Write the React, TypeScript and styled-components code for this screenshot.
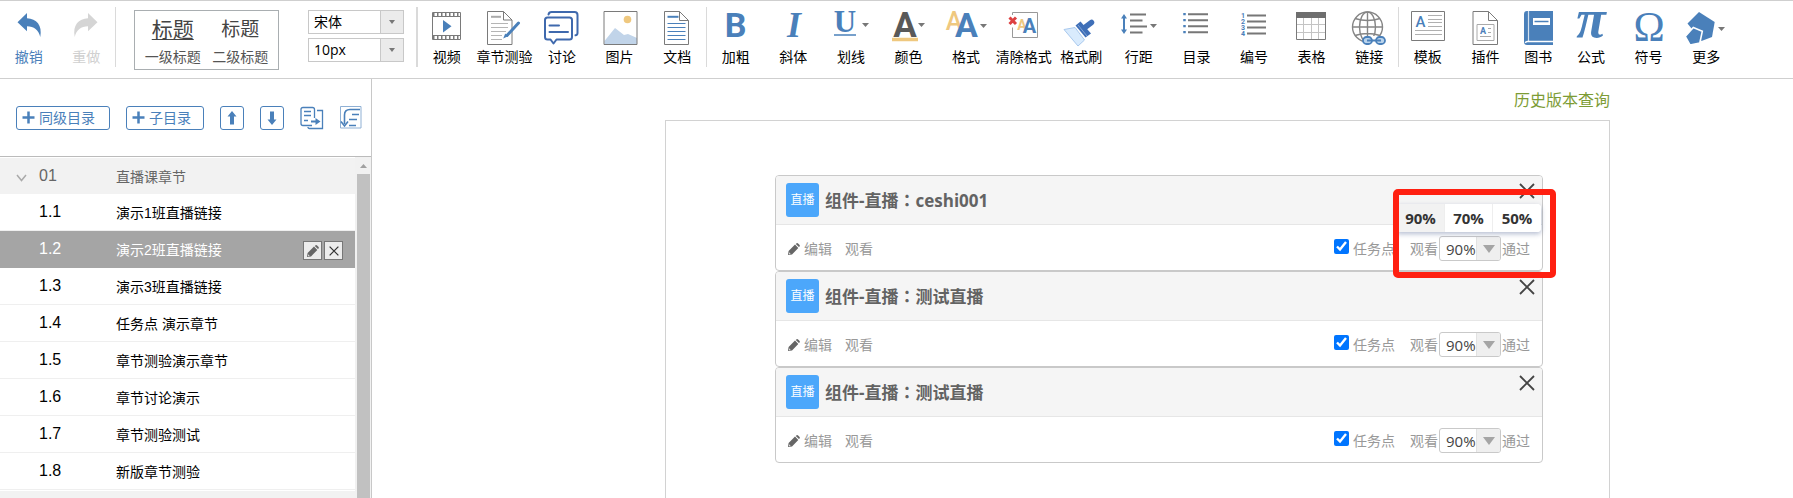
import React from "react";
import styled, { createGlobalStyle, css } from "styled-components";

const BLUE = "#4a80ba";
const GRAY = "#7a7a7a";
const GOLD = "#efc87f";

const GlobalStyle = createGlobalStyle`
  * { box-sizing: border-box; }
  body {
    margin: 0;
    background: #fff;
    color: #111;
    font-family: "Open Sans", "Noto Sans CJK SC", sans-serif;
    font-size: 14px;
    overflow: hidden;
  }
  button, select, input { font: inherit; color: inherit; margin: 0; }
  button { border: 0; padding: 0; background: none; cursor: pointer; }
  svg { display: block; flex: none; overflow: visible; }
`;

const Page = styled.div`
  display: flex;
  flex-direction: column;
  height: 100vh;
`;

/* ---------- top toolbar ---------- */

const Toolbar = styled.header`
  display: flex;
  flex: none;
  padding: 6px 0 11px;
  border-top: 1px solid #cfcfcf;
  border-bottom: 1px solid #cfcfcf;
`;

const ToolGroup = styled.div<{ $width: number; $columns: string }>`
  display: grid;
  flex: none;
  width: ${(p) => p.$width}px;
  grid-template-columns: ${(p) => p.$columns};
`;

const Separator = styled.div<{ $wide?: boolean }>`
  flex: none;
  width: ${(p) => (p.$wide ? 2 : 1)}px;
  height: 60px;
  background: #dadada;
`;

const ToolButton = styled.button<{ $tone?: string }>`
  display: flex;
  flex-direction: column;
  align-items: center;
  padding-top: 3px;
  gap: 2px;
  min-width: 0;
  line-height: 18px;
  white-space: nowrap;
  color: ${(p) => p.$tone || "#000"};
`;

const StyleArea = styled.div`
  display: flex;
  flex: none;
  width: 300px;
  height: 60px;
  padding: 3px 0 0 18px;
  gap: 29px;
`;

const HeadingBox = styled.div`
  display: grid;
  grid-template-columns: 1fr 1fr;
  flex: none;
  width: 145px;
  height: 60px;
  padding: 0 4px;
  border: 1px solid #a9aeb1;
`;

const HeadingButton = styled.button<{ $main?: boolean }>`
  display: flex;
  flex-direction: column;
  align-items: center;
  color: #555;
  white-space: nowrap;
  line-height: 18px;
  strong {
    font-weight: 400;
    color: #444;
    font-size: ${(p) => (p.$main ? 21 : 19)}px;
    line-height: 37px;
    text-decoration: ${(p) => (p.$main ? "underline" : "none")};
    text-underline-offset: 2px;
    text-decoration-thickness: 1px;
  }
`;

const FontSelects = styled.div`
  display: flex;
  flex-direction: column;
  gap: 4px;
`;

const selectFace = css`
  appearance: none;
  width: 100%;
  height: 100%;
  border: 0;
  background: transparent;
  outline: none;
`;

const FontSelect = styled.label`
  display: grid;
  grid-template-columns: 1fr 23px;
  width: 96px;
  height: 24px;
  border: 1px solid #c8c8c8;
  color: #000;
  select { ${selectFace} padding: 0 0 2px 5px; }
  span {
    display: grid;
    place-items: center;
    background: #ebebeb;
    border-left: 1px solid #c8c8c8;
  }
`;

/* ---------- catalogue sidebar ---------- */

const Body = styled.div`
  display: flex;
  flex: 1;
  min-height: 0;
`;

const Sidebar = styled.aside`
  display: flex;
  flex-direction: column;
  flex: none;
  width: 372px;
  border-right: 1px solid #c8c8c8;
`;

const SidebarActions = styled.div`
  display: flex;
  flex: none;
  align-items: center;
  gap: 16px;
  height: 78px;
  padding: 0 9px 0 16px;
  border-bottom: 1px solid #bbb;
`;

const OutlineButton = styled.button<{ $width: number }>`
  display: flex;
  flex: none;
  align-items: center;
  justify-content: ${(p) => (p.$width > 24 ? "flex-start" : "center")};
  gap: 4px;
  width: ${(p) => p.$width}px;
  height: 24px;
  padding-left: ${(p) => (p.$width > 24 ? 5 : 0)}px;
  border: 1px solid ${BLUE};
  border-radius: 3px;
  color: ${BLUE};
  white-space: nowrap;
  line-height: 20px;
`;

const Catalogue = styled.div`
  display: flex;
  flex: 1;
  min-height: 0;
`;

const ChapterList = styled.ul`
  flex: 1;
  margin: 0;
  padding: 0;
  list-style: none;
  overflow: hidden;
  font-family: "Liberation Sans", "Noto Sans CJK SC", sans-serif;
`;

const ChapterRow = styled.li<{ $kind?: "head" | "active" }>`
  display: grid;
  grid-template-columns: 38px 78px 1fr auto;
  align-items: center;
  height: 37px;
  padding-right: 12px;
  border-bottom: 1px solid #efefef;
  color: #000;
  ${(p) =>
    p.$kind === "head" &&
    css`
      border-top: 1px solid #fff;
      border-bottom-color: #f2f2f2;
      background: #f2f2f2;
      color: #666;
    `}
  ${(p) =>
    p.$kind === "active" &&
    css`
      border-bottom-color: #a5a5a5;
      background: #a5a5a5;
      color: #fff;
    `}
`;

const ChapterToggle = styled.span`
  padding: 4px 0 0 16px;
`;

const ChapterNumber = styled.span`
  font-size: 16px;
  line-height: 20px;
  padding-left: 1px;
`;

const RowActions = styled.span`
  display: flex;
  gap: 2px;
  padding-top: 3px;
`;

const SmallButton = styled.button`
  display: grid;
  place-items: center;
  width: 19px;
  height: 19px;
  border: 1px solid #777;
  background: #ececec;
`;

const ScrollTrack = styled.div`
  display: flex;
  flex-direction: column;
  width: 16px;
  padding: 0 1px 0 2px;
  background: #f1f1f1;
  svg { margin: 7px auto 6px; }
`;

const ScrollThumb = styled.div`
  flex: 1;
  background: #c1c1c1;
`;

/* ---------- editor ---------- */

const Main = styled.main`
  display: flex;
  flex-direction: column;
  flex: 1;
  min-width: 0;
  padding: 9px 183px 0 293px;
`;

const HistoryLink = styled.a`
  align-self: flex-end;
  margin-bottom: 8px;
  font-size: 16px;
  line-height: 24px;
  color: #7d9c35;
  text-decoration: none;
`;

const Sheet = styled.div`
  flex: 1;
  padding: 54px 66px 0 109px;
  border: 1px solid #d2d2d2;
  border-bottom: 0;
`;

const Card = styled.section`
  position: relative;
  height: 96px;
  border: 1px solid #c9c9c9;
  border-radius: 4px;
`;

const CardHeader = styled.div`
  display: flex;
  align-items: center;
  gap: 6px;
  height: 49px;
  padding: 0 7px 0 10px;
  border-bottom: 1px solid #e6e6e6;
  border-radius: 3px 3px 0 0;
  background: #f5f5f5;
`;

const LiveBadge = styled.span`
  display: grid;
  place-items: center;
  flex: none;
  width: 33px;
  height: 34px;
  border-radius: 3px;
  background: #4ca7fb;
  color: #fff;
  font-size: 12px;
  line-height: 16px;
`;

const CardTitle = styled.h2`
  flex: 1;
  margin: 0;
  font-size: 17px;
  line-height: 24px;
  font-weight: 700;
  color: #636363;
`;

const Colon = styled.span`
  font-family: "Noto Sans CJK TC", sans-serif;
`;

const CloseButton = styled.button`
  align-self: flex-start;
  padding-top: 7px;
`;

const CardFooter = styled.div`
  display: flex;
  align-items: center;
  height: 45px;
  padding: 2px 12px 0;
  color: #999;
  line-height: 20px;
`;

const TextButton = styled.button`
  display: flex;
  align-items: center;
  gap: 4px;
  margin-right: 13px;
`;

const TaskOption = styled.label`
  display: flex;
  align-items: center;
  gap: 4px;
  margin: 0 15px 0 auto;
  input {
    width: 15px;
    height: 15px;
    margin-bottom: 4px;
    accent-color: #0075ff;
  }
`;

const RateOption = styled.label`
  display: flex;
  align-items: center;
`;

const RateSelect = styled.span`
  display: grid;
  grid-template-columns: 1fr 24px;
  width: 62px;
  height: 25px;
  margin: 0 1px;
  border: 1px solid #c9c9c9;
  border-radius: 3px;
  overflow: hidden;
  color: #444;
  font-size: 15px;
  select { ${selectFace} padding: 0 0 0 6px; }
  span {
    display: grid;
    place-items: center;
    background: #efefef;
    border-left: 1px solid #e2e2e2;
  }
`;

const RateMenu = styled.div`
  position: absolute;
  top: 28px;
  right: 1px;
  display: grid;
  grid-template-columns: repeat(3, 48px);
  height: 28px;
  border-radius: 0 4px 4px 0;
  background: #fff;
  box-shadow: 0 2px 5px rgba(70, 90, 140, 0.4);
`;

const RateItem = styled.button<{ $on?: boolean }>`
  border-right: 1px solid #eee;
  background: ${(p) => (p.$on ? "#f2f2f2" : "#fff")};
  color: #333;
  font-size: 15px;
  font-weight: 700;
  &:last-child { border-right: 0; border-radius: 0 4px 4px 0; }
`;

const Highlight = styled.div`
  position: absolute;
  top: 13px;
  right: -14px;
  width: 163px;
  height: 89px;
  border: 6px solid #ff2011;
  border-radius: 5px;
  pointer-events: none;
  z-index: 2;
`;

/* ---------- drawings ---------- */

const Svg = ({ children }: { children: React.ReactNode }) => (
  <svg width="40" height="36" viewBox="0 0 40 36" fill="none" aria-hidden="true">
    {children}
  </svg>
);

const Caret = ({ x, y }: { x: number; y: number }) => (
  <path d={`M${x} ${y}h7l-3.5 4z`} fill="#777" />
);

const SERIF = "Liberation Serif, serif";
const SANS = "Roboto, sans-serif";

const Glyph = (p: {
  x: number;
  y: number;
  size: number;
  fill?: string;
  family?: string;
  weight?: number;
  italic?: boolean;
  children: string;
}) => (
  <text
    x={p.x}
    y={p.y}
    fontSize={p.size}
    fill={p.fill || BLUE}
    fontFamily={p.family || SANS}
    fontWeight={p.weight || 700}
    fontStyle={p.italic ? "italic" : "normal"}
    textAnchor="middle"
  >
    {p.children}
  </text>
);

const arrowPath = "M8.5 12.2L18 3v5.2C27.500 8.500 33.500 15 31.300 27C29.500 20 25 16.300 18 16.300v5z";

const icons: Record<string, React.ReactNode> = {
  undo: <path d={arrowPath} fill={BLUE} />,
  redo: <path d={arrowPath} fill="#d5d5d5" transform="translate(40 0) scale(-1 1)" />,
  video: (
    <>
      <path d="M5.500 2.500h28v27h-28z" stroke={GRAY} />
      <path d="M5.500 6.500h28M5.500 25.500h28" stroke={GRAY} />
      <path d="M6 4.500h27M6 27.500h27" stroke={GRAY} strokeWidth="3" strokeDasharray="1.500 2.500" />
      <path d="M16 10v12.500l8.500-6.200z" fill={BLUE} />
    </>
  ),
  quiz: (
    <>
      <path d="M3.500 1.500h16l8.500 8.500v24.500h-24.500z" stroke={GRAY} />
      <path d="M19.500 1.500v8.500h8.500" stroke={GRAY} />
      <path d="M7 6.800h10" stroke="#aaa" strokeWidth="2" />
      <path d="M7 13.500h17M7 17.500h17M7 21.500h15M7 25.500h11M7 29.500h11" stroke="#b5b5b5" />
      <path d="M34.500 13L23 25.500" stroke={BLUE} strokeWidth="3" strokeLinecap="round" />
      <path d="M21.200 23.500l-2 5 4.800-2.200z" fill={BLUE} />
    </>
  ),
  discuss: (
    <g stroke="#3f69ad" strokeWidth="2" strokeLinejoin="round" strokeLinecap="round">
      <path d="M6.500 4.500q.5-2.500 3-2.500h23q3 0 3 3v18q0 2-2 2.300" />
      <path d="M5.500 7.500h22q2.500 0 2.500 2.500v17q0 2.500-2.500 2.500h-13l-3 4-3-4h-3q-2.500 0-2.500-2.500v-17q0-2.500 2.500-2.500z" fill="#fff" />
      <path d="M7.500 15.500h9.500M7.500 22h18.500" />
    </g>
  ),
  image: (
    <>
      <path d="M4.500 31l10.500-13 9 7 4-1 9 4v6.500h-32.500z" fill="#c1d4e9" />
      <path d="M4 1.500h33v33h-33z" stroke={GRAY} />
      <circle cx="27.500" cy="9.500" r="3.800" fill={GOLD} />
    </>
  ),
  doc: (
    <>
      <path d="M7.500 1.500h15l9 9v24h-24z" stroke={GRAY} />
      <path d="M22.500 1.500v9h9" stroke={GRAY} />
      <path d="M10.500 6.800h11" stroke={BLUE} strokeWidth="2" />
      <path d="M10.500 13.500h18M10.500 17.500h18M10.500 21.500h18M10.500 25.500h18M10.500 29.500h18" stroke={BLUE} />
    </>
  ),
  bold: <Glyph x={19.5} y={26.5} size={34}>B</Glyph>,
  italic: <Glyph x={21} y={27} size={36} family={SERIF} italic>I</Glyph>,
  underline: (
    <>
      <Glyph x={14} y={22} size={31} family={SERIF}>U</Glyph>
      <path d="M3 25h22" stroke={BLUE} strokeWidth="1.500" />
      <Caret x={31} y={13} />
    </>
  ),
  color: (
    <>
      <Glyph x={16} y={27} size={35} fill="#595959">A</Glyph>
      <path d="M3 29.500h26" stroke={GOLD} strokeWidth="3.500" />
      <Caret x={29} y={13} />
    </>
  ),
  format: (
    <>
      <Glyph x={8} y={20} size={25} weight={500} fill={GOLD}>A</Glyph>
      <Glyph x={20.5} y={27} size={34}>A</Glyph>
      <Caret x={34} y={14} />
    </>
  ),
  clear: (
    <>
      <path d="M8.500 5v-2.500h25v25h-25v-10" stroke="#999" />
      <path d="M5.500 7.500l6.500 6.500M12 7.500l-6.500 6.500" stroke="#dd4141" strokeWidth="3" />
      <Glyph x={18} y={20} size={14} fill={GOLD}>A</Glyph>
      <Glyph x={25.5} y={23} size={20}>A</Glyph>
    </>
  ),
  brush: (
    <>
      <path d="M3 19.500l11-2 9.500 12.500-6.500 6z" fill="#d9ebfd" stroke="#a9c9ee" />
      <path d="M14.500 15.500l5-4 10.500 12-5.500 4z" fill="#3f6fb8" />
      <path d="M24.500 17l6-4.500" stroke="#3f6fb8" strokeWidth="5.500" strokeLinecap="round" />
      <path d="M17 15l9 11" stroke="#7fa4d6" />
    </>
  ),
  spacing: (
    <>
      <path d="M5 6v16" stroke={BLUE} strokeWidth="2" />
      <path d="M2 8.500l3-4.500 3 4.500zM2 19.500l3 4.500 3-4.500z" fill={BLUE} />
      <path d="M11 4.500h16M11 10.500h12.500M11 16.500h17M11 22.500h12.500" stroke="#777" strokeWidth="2" />
      <Caret x={31} y={14} />
    </>
  ),
  bullets: (
    <>
      <path d="M8.500 3v2.200M8.500 9v2.200M8.500 15v2.200M8.500 21v2.200" stroke={BLUE} strokeWidth="2.500" />
      <path d="M12 4.200h20M12 10.200h20M12 16.200h20M12 22.200h20" stroke="#777" strokeWidth="2" />
    </>
  ),
  numbers: (
    <>
      <Glyph x={9} y={8} size={7}>1</Glyph>
      <Glyph x={9} y={14} size={7}>2</Glyph>
      <Glyph x={9} y={20} size={7}>3</Glyph>
      <Glyph x={9} y={26} size={7}>4</Glyph>
      <path d="M13 5.500h19M13 11.500h19M13 17.500h19M13 23.500h19" stroke="#777" strokeWidth="2" />
    </>
  ),
  table: (
    <>
      <path d="M4.500 14.500h29M4.500 22.500h29M11.500 8v21M19.500 8v21M26.500 8v21" stroke="#c4c4c4" />
      <path d="M4.500 2.500h29v27h-29z" stroke={GRAY} />
      <path d="M4 2h30v6h-30z" fill="#6e6e6e" />
    </>
  ),
  link: (
    <>
      <g stroke="#858585" strokeWidth="1.400">
        <circle cx="18.500" cy="17" r="15" />
        <ellipse cx="18.500" cy="17" rx="8" ry="15" />
        <path d="M18.500 2v30M3.500 17h30M6 8.500q12.500 4 25 0M6 25.500q12.500-4 25 0" />
      </g>
      <path d="M14 26h23v9h-23z" fill="#fff" />
      <g stroke={BLUE} strokeWidth="1.800">
        <rect x="14" y="27" width="9" height="7" rx="3.500" fill="#b9d3ec" />
        <rect x="27" y="27" width="9" height="7" rx="3.500" fill="#b9d3ec" />
        <path d="M18 30.500h14" strokeWidth="2" />
      </g>
    </>
  ),
  template: (
    <>
      <path d="M3.500 1.500h33v29h-33z" stroke={GRAY} />
      <Glyph x={12.5} y={17} size={15} weight={500}>A</Glyph>
      <path d="M20 5.500h14M20 9.500h14M20 12.500h14M20 16.500h14M7 20.500h27M7 24.500h27" stroke="#b0b0b0" />
    </>
  ),
  plugin: (
    <>
      <path d="M8 1.500h15.500l9 9v24h-24.500z" stroke={GRAY} />
      <path d="M23.500 1.500v9h9" stroke={GRAY} />
      <path d="M12 14.500h17v16h-17z" stroke="#aaa" />
      <Glyph x={18} y={24} size={9}>A</Glyph>
      <path d="M23 18.500h3M23 22.500h3M15 26.500h11" stroke="#aaa" />
    </>
  ),
  book: (
    <>
      <path d="M9 1h26v34h-26q-3 0-3-3v-28q0-3 3-3z" fill={BLUE} />
      <path d="M10.500 1v30" stroke="#d3e1ef" strokeWidth="1.200" />
      <path d="M35 31.500h-25.500q-2 0-2 1.500" stroke="#fff" strokeWidth="1.300" />
      <path d="M15 8h17v7h-17z" fill="#fff" />
      <path d="M16.500 11.500h14" stroke={BLUE} strokeWidth="1.500" />
    </>
  ),
  formula: <Glyph x={20} y={27} size={54} family={SERIF} italic>π</Glyph>,
  symbol: <Glyph x={20} y={31} size={42} family={SERIF} weight={400}>Ω</Glyph>,
  more: (
    <>
      <path d="M13 2l15.700 10-2.700 15-10.500 4-14-17.500z" fill={BLUE} />
      <path
        d="M7.300 17.500l9 3.800-2.500 11.700-9.800 2-4.800-8.500z"
        fill={BLUE}
        stroke="#fff"
        strokeWidth="1.600"
      />
      <Caret x={32} y={17} />
    </>
  ),
};

const PencilIcon = () => (
  <svg width="12" height="12" viewBox="0 0 12 12" fill="#666" aria-hidden="true">
    <path d="M0 12l.6-4L7 1.600 10.300 5 4 11.400zM7.800 .9L8.600.2q.8-.5 1.500.2l1.500 1.500q.6.8 0 1.500l-.7.700z" />
    <path d="M1 9.300l1.700 1.700-1.500.3z" fill="#eee" />
  </svg>
);

const CrossIcon = ({ size, color, width }: { size: number; color: string; width: number }) => (
  <svg width={size} height={size} viewBox="0 0 16 16" aria-hidden="true">
    <path d="M1 1l14 14M15 1L1 15" stroke={color} strokeWidth={width} />
  </svg>
);

const PlusIcon = () => (
  <svg width="13" height="13" viewBox="0 0 13 13" aria-hidden="true">
    <path d="M6.500 .5v12M.5 6.500h12" stroke={BLUE} strokeWidth="2.500" />
  </svg>
);

const MoveIcon = ({ down }: { down?: boolean }) => (
  <svg width="10" height="14" viewBox="0 0 10 14" aria-hidden="true">
    <path
      d="M5 0l4.500 5.500h-2.500v8h-4v-8h-2.500z"
      fill={BLUE}
      transform={down ? "rotate(180 5 7)" : undefined}
    />
  </svg>
);

const DuplicateIcon = () => (
  <svg width="24" height="24" viewBox="0 0 24 24" fill="none" stroke={BLUE} aria-hidden="true">
    <path d="M14.500 12v-8.500q0-2-2-2h-9.500q-2 0-2 2v14q0 2 2 2h9" strokeWidth="1.300" />
    <path d="M17 4.500h5.500v18h-13q-1.500 0-1.500-1.500" strokeWidth="1.300" />
    <path d="M4 5.500h7M4 9.500h7M4 14.500h4" strokeWidth="1.500" />
    <path d="M11 15.500h6" strokeWidth="2" />
    <path d="M15.500 12l5 3.500-5 3.500z" fill={BLUE} stroke="none" />
  </svg>
);

const ImportIcon = () => (
  <svg width="22" height="23" viewBox="0 0 22 23" fill="none" stroke={BLUE} aria-hidden="true">
    <path d="M.5 .5h20.500v21.500h-20.500z" stroke="#8fb0d4" />
    <path d="M20 3.500h-10q-5.500 0-5.500 5.500v9" strokeWidth="1.600" />
    <path d="M1 15.500l3.500 4.500 3.500-4.500" strokeWidth="1.600" />
    <path d="M12 8.500h7M9 13.500h8M9 19.500h7" strokeWidth="1.500" />
  </svg>
);

const Triangle = ({ w, h, color, up }: { w: number; h: number; color: string; up?: boolean }) => (
  <svg width={w} height={h} viewBox={`0 0 ${w} ${h}`} aria-hidden="true">
    <path d={up ? `M0 ${h}h${w}L${w / 2} 0z` : `M0 0h${w}L${w / 2} ${h}z`} fill={color} />
  </svg>
);

/* ---------- data ---------- */

type Tool = [icon: string, label: string];

const insertTools: Tool[] = [
  ["video", "视频"],
  ["quiz", "章节测验"],
  ["discuss", "讨论"],
  ["image", "图片"],
  ["doc", "文档"],
];

const formatTools: Tool[] = [
  ["bold", "加粗"],
  ["italic", "斜体"],
  ["underline", "划线"],
  ["color", "颜色"],
  ["format", "格式"],
  ["clear", "清除格式"],
  ["brush", "格式刷"],
  ["spacing", "行距"],
  ["bullets", "目录"],
  ["numbers", "编号"],
  ["table", "表格"],
  ["link", "链接"],
];

const extraTools: Tool[] = [
  ["template", "模板"],
  ["plugin", "插件"],
  ["book", "图书"],
  ["formula", "公式"],
  ["symbol", "符号"],
  ["more", "更多"],
];

const lessons = [
  "演示1班直播链接",
  "演示2班直播链接",
  "演示3班直播链接",
  "任务点 演示章节",
  "章节测验演示章节",
  "章节讨论演示",
  "章节测验测试",
  "新版章节测验",
];

const ToolItem = ({ icon, label, tone }: { icon: string; label: string; tone?: string }) => (
  <ToolButton type="button" $tone={tone}>
    <Svg>{icons[icon]}</Svg>
    {label}
  </ToolButton>
);

const Tools = ({ items, width, columns }: { items: Tool[]; width: number; columns: string }) => (
  <ToolGroup $width={width} $columns={columns}>
    {items.map(([icon, label]) => (
      <ToolItem key={icon} icon={icon} label={label} />
    ))}
  </ToolGroup>
);

const LiveCard = ({ name, menuOpen }: { name: string; menuOpen?: boolean }) => (
  <Card>
    <CardHeader>
      <LiveBadge>直播</LiveBadge>
      <CardTitle>
        组件-直播<Colon>：</Colon>
        {name}
      </CardTitle>
      <CloseButton type="button" aria-label="关闭">
        <CrossIcon size={16} color="#444" width={1.8} />
      </CloseButton>
    </CardHeader>
    <CardFooter>
      <TextButton type="button">
        <PencilIcon />
        编辑
      </TextButton>
      <TextButton type="button">观看</TextButton>
      <TaskOption>
        <input type="checkbox" defaultChecked />
        任务点
      </TaskOption>
      <RateOption>
        观看
        <RateSelect>
          <select defaultValue="90%">
            <option>90%</option>
            <option>70%</option>
            <option>50%</option>
          </select>
          <span>
            <Triangle w={12} h={8} color="#a5a5a5" />
          </span>
        </RateSelect>
        通过
      </RateOption>
    </CardFooter>
    {menuOpen && (
      <>
        <RateMenu>
          <RateItem type="button" $on>90%</RateItem>
          <RateItem type="button">70%</RateItem>
          <RateItem type="button">50%</RateItem>
        </RateMenu>
        <Highlight />
      </>
    )}
  </Card>
);

export default function App() {
  return (
    <Page>
      <GlobalStyle />
      <Toolbar>
        <ToolGroup $width={115} $columns="1fr 1fr">
          <ToolItem icon="undo" label="撤销" tone={BLUE} />
          <ToolItem icon="redo" label="重做" tone="#d0d0d0" />
        </ToolGroup>
        <Separator />
        <StyleArea>
          <HeadingBox>
            <HeadingButton type="button" $main>
              <strong>标题</strong>
              一级标题
            </HeadingButton>
            <HeadingButton type="button">
              <strong>标题</strong>
              二级标题
            </HeadingButton>
          </HeadingBox>
          <FontSelects>
            <FontSelect>
              <select aria-label="字体" defaultValue="宋体">
                <option>宋体</option>
              </select>
              <span>
                <Triangle w={6} h={4} color="#777" />
              </span>
            </FontSelect>
            <FontSelect>
              <select aria-label="字号" defaultValue="10px">
                <option>10px</option>
              </select>
              <span>
                <Triangle w={6} h={4} color="#777" />
              </span>
            </FontSelect>
          </FontSelects>
        </StyleArea>
        <Separator $wide />
        <Tools items={insertTools} width={288} columns="repeat(5, 1fr)" />
        <Separator />
        <Tools items={formatTools} width={691} columns="repeat(12, 1fr)" />
        <Separator />
        <Tools items={extraTools} width={336} columns="1fr 1fr 48px 1fr 1fr 1fr" />
      </Toolbar>
      <Body>
        <Sidebar>
          <SidebarActions>
            <OutlineButton type="button" $width={94}>
              <PlusIcon />
              同级目录
            </OutlineButton>
            <OutlineButton type="button" $width={78}>
              <PlusIcon />
              子目录
            </OutlineButton>
            <OutlineButton type="button" $width={24} aria-label="上移">
              <MoveIcon />
            </OutlineButton>
            <OutlineButton type="button" $width={24} aria-label="下移">
              <MoveIcon down />
            </OutlineButton>
            <button type="button" aria-label="复制">
              <DuplicateIcon />
            </button>
            <button type="button" aria-label="导入">
              <ImportIcon />
            </button>
          </SidebarActions>
          <Catalogue>
            <ChapterList>
              <ChapterRow $kind="head">
                <ChapterToggle>
                  <svg width="11" height="8" viewBox="0 0 11 8" fill="none" aria-hidden="true">
                    <path d="M1 1l4.500 5.500L10 1" stroke="#aaa" strokeWidth="1.500" />
                  </svg>
                </ChapterToggle>
                <ChapterNumber>01</ChapterNumber>
                <span>直播课章节</span>
              </ChapterRow>
              {lessons.map((title, i) => (
                <ChapterRow key={title} $kind={i === 1 ? "active" : undefined}>
                  <span />
                  <ChapterNumber>1.{i + 1}</ChapterNumber>
                  <span>{title}</span>
                  {i === 1 && (
                    <RowActions>
                      <SmallButton type="button" aria-label="编辑">
                        <PencilIcon />
                      </SmallButton>
                      <SmallButton type="button" aria-label="删除">
                        <CrossIcon size={10} color="#333" width={2} />
                      </SmallButton>
                    </RowActions>
                  )}
                </ChapterRow>
              ))}
              <ChapterRow $kind="head" />
            </ChapterList>
            <ScrollTrack aria-hidden="true">
              <Triangle w={7} h={4} color="#a0a0a0" up />
              <ScrollThumb />
            </ScrollTrack>
          </Catalogue>
        </Sidebar>
        <Main>
          <HistoryLink href="#history">历史版本查询</HistoryLink>
          <Sheet>
            <LiveCard name="ceshi001" menuOpen />
            <LiveCard name="测试直播" />
            <LiveCard name="测试直播" />
          </Sheet>
        </Main>
      </Body>
    </Page>
  );
}
